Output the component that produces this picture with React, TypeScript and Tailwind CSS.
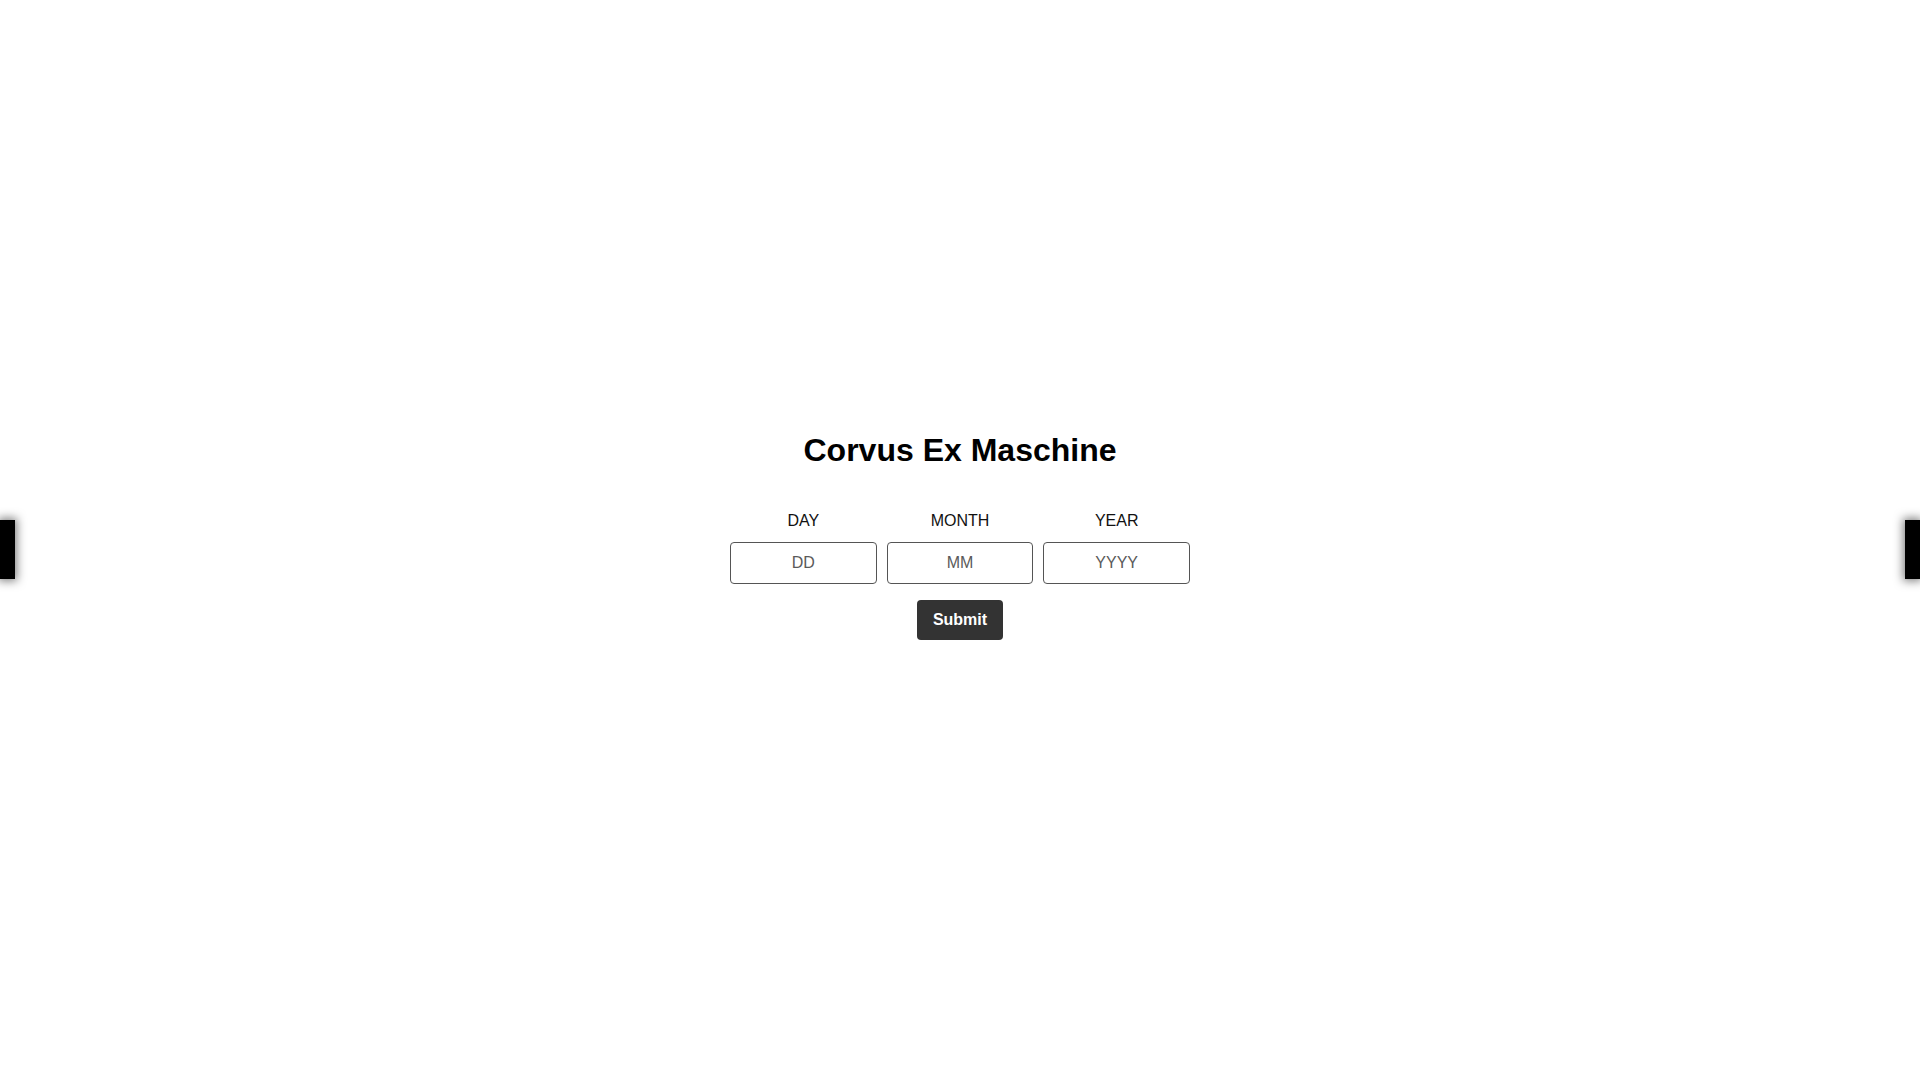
export default function App() {
  const fields = [
    { label: "DAY", placeholder: "DD" },
    { label: "MONTH", placeholder: "MM" },
    { label: "YEAR", placeholder: "YYYY" },
  ];

  return (
    <div className="relative min-h-screen overflow-hidden bg-white font-['Liberation_Sans',Arial,sans-serif] text-black">
      {/* side tabs */}
      <div className="absolute left-0 top-[520px] h-[59px] w-[15px] bg-black shadow-[0_0_10px_2px_rgba(0,0,0,0.5)]" />
      <div className="absolute right-0 top-[520px] h-[59px] w-[15px] bg-black shadow-[0_0_10px_2px_rgba(0,0,0,0.5)]" />

      <div className="flex flex-col items-center pt-[432px]">
        <h1 className="text-[32px] font-bold leading-[37px]">Corvus Ex Maschine</h1>

        <div className="mt-[43px] flex w-[460px] gap-[10px]">
          {fields.map((f) => (
            <div key={f.label} className="flex flex-1 flex-col items-center">
              <label className="text-base leading-[18px] text-[#111]">{f.label}</label>
              <input
                type="text"
                placeholder={f.placeholder}
                className="mt-[12px] h-[42px] w-full rounded-[4px] border border-[#555] bg-white text-center text-base placeholder:text-[#5a5a5a] focus:outline-none"
              />
            </div>
          ))}
        </div>

        <button className="mt-[16px] h-[40px] rounded-[4px] bg-[#333] px-4 text-base font-bold text-white">
          Submit
        </button>
      </div>
    </div>
  );
}
